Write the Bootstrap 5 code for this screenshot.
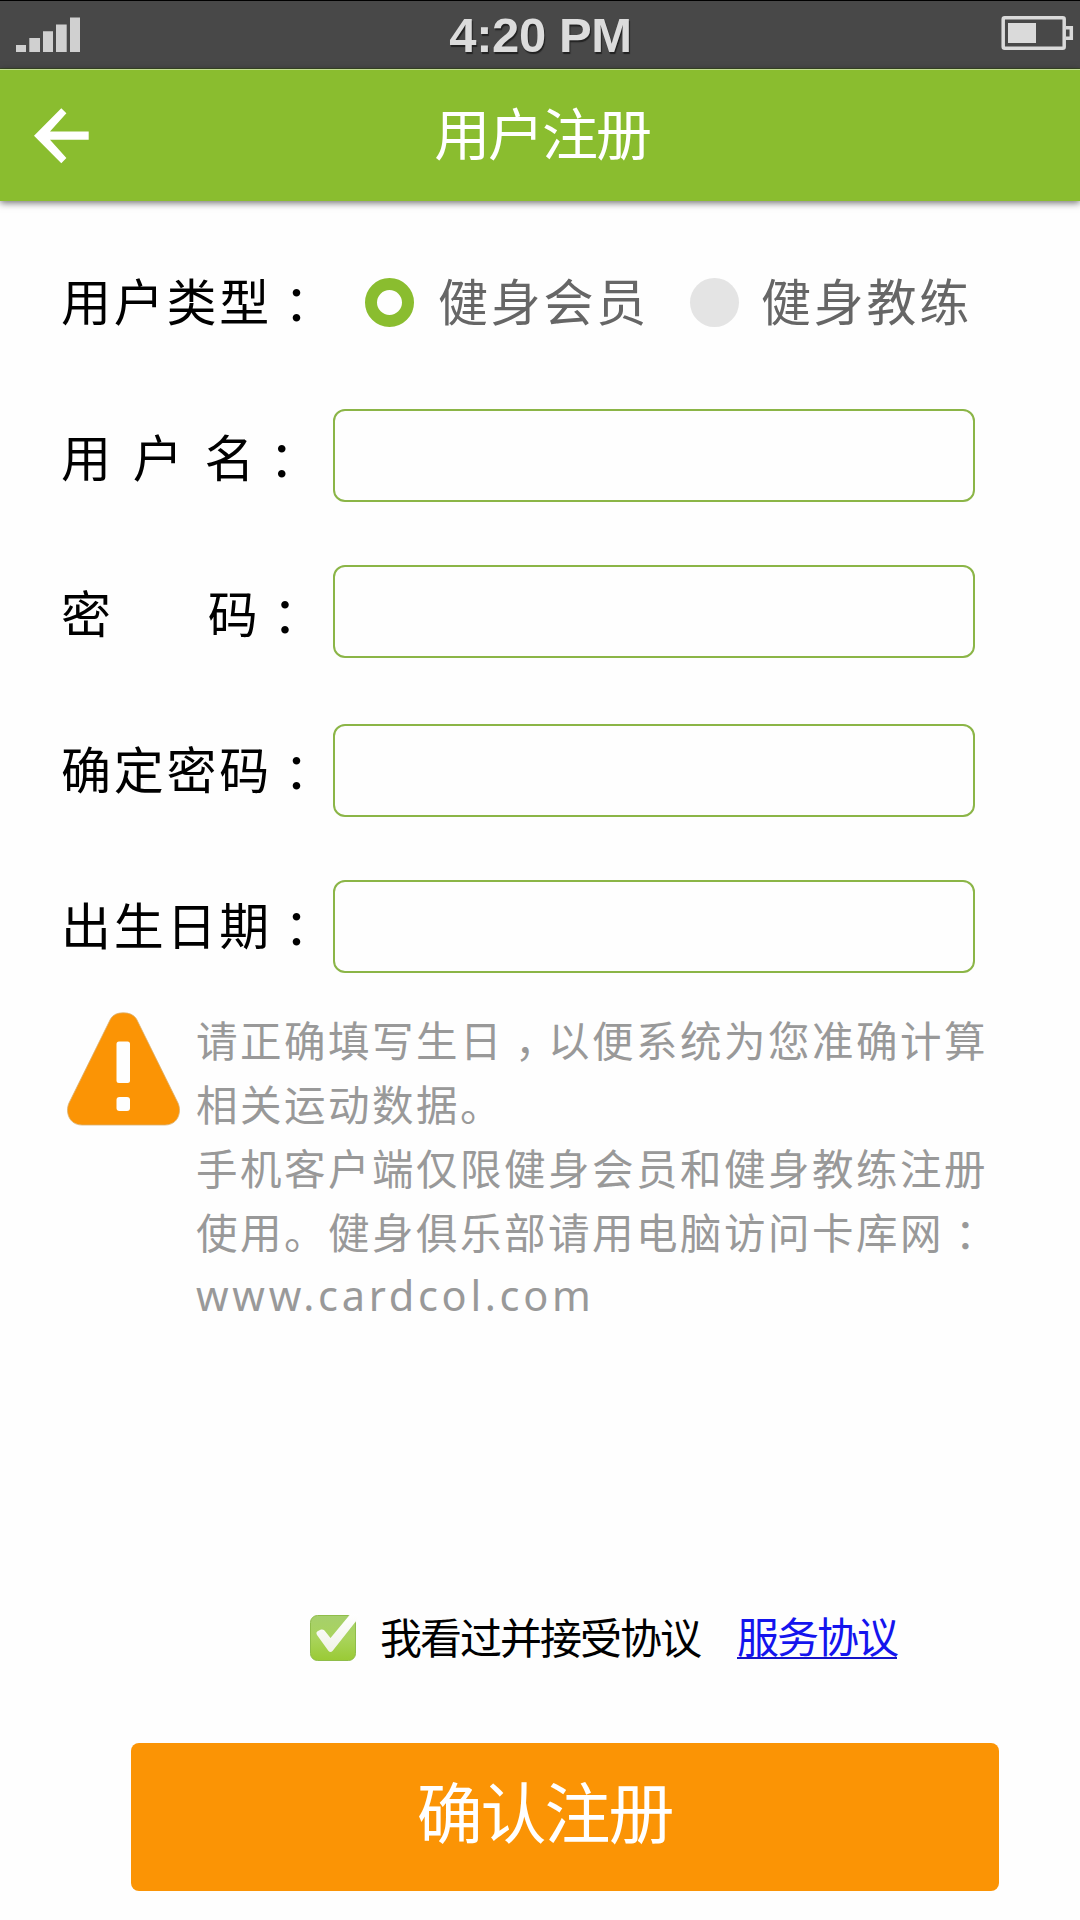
<!DOCTYPE html>
<html lang="zh-CN">
<head>
<meta charset="utf-8">
<meta name="viewport" content="width=device-width, initial-scale=1">
<title>用户注册</title>
<link rel="stylesheet" href="https://cdn.jsdelivr.net/npm/bootstrap@5.3.0/dist/css/bootstrap.min.css">
<style>
  body { font-family: "Noto Sans CJK SC", sans-serif; background: #fefefe; color: #000; }
  .screen { width: 1080px; height: 1920px; overflow: hidden; }
  .punct { padding-left: 12px; letter-spacing: -9.25px; }
  .notice-text .punct { padding-left: 11px; letter-spacing: -8.5px; }
  .statusbar { height: 69px; background: #484848; border-top: 1px solid #000; border-bottom: 1px solid #3a4a24; padding: 0 6px 0 16px; }
  .clock { font: bold 49px/67px "Liberation Sans", Arial, sans-serif; letter-spacing: -.4px; color: #dcdcdc; text-shadow: 1px 2px 1px #222; padding: 2px 9px 0 0; }
  .side { width: 80px; }
  .titlebar { height: 132px; background: #8abd2f; border-top: 1px solid #c2dc92; box-shadow: 0 2px 7px rgba(0,0,0,.55); padding: 0 34px; }
  .titlebar h1 { font-size: 56px; line-height: 70px; letter-spacing: -2.1px; font-weight: 400; color: #fff; padding: 0 0 9px 4px; }
  .titlebar .side { width: 56px; }
  .form-area { padding: 77px 0 0 61px; }
  .form-line { height: 93px; margin-bottom: 63px; }
  .form-line.type-line { height: 49px; margin-bottom: 82px; }
  .field-name { width: 272px; font-size: 50px; line-height: 60px; letter-spacing: 2.75px; white-space: nowrap; padding-bottom: 8px; }
  .field-name.spaced { word-spacing: 5px; }
  .wide-gap { padding-left: 94px; }
  .field-name.nudge { padding: 0 0 2px; }
  .form-control.field { width: 642px; height: 93px; border: 2px solid #8bb547; border-radius: 12px; font-size: 44px; background: #fefefe; }
  .choice { font-size: 50px; line-height: 60px; letter-spacing: 2.75px; color: #666; white-space: nowrap; }
  .choice span { padding-bottom: 8px; }
  .form-check-input.dot { width: 49px; height: 49px; margin: 0; border: 0; background: #e4e4e4; }
  .form-check-input.dot:checked { background: #fefefe; border: 12px solid #8abd2f; }
  .notice { padding: 38px 0 0 66px; }
  .notice-text { font-size: 41.5px; line-height: 64px; letter-spacing: 2.5px; color: #999; margin: -4px 0 0 15px; white-space: nowrap; }
  .site { font-family: "Noto Sans", sans-serif; letter-spacing: 3.7px; display: block; }
  .agree { font-size: 42px; line-height: 50px; letter-spacing: -2px; margin-top: 287px; padding-left: 309px; }
  .agree span, .agree a { margin-top: -4px; }
  .agree a { color: #1414ee; text-decoration: none; line-height: 44px; border-bottom: 2px solid #1414c8; margin-left: 37px; }
  .btn.submit { width: 868px; height: 148px; margin: 81px 0 0 131px; border: 0; border-radius: 8px; background: #fb9405; color: #fff; font-size: 66px; line-height: 80px; letter-spacing: -2.1px; padding: 0 41px 17px 0; }
</style>
<script src="https://cdn.jsdelivr.net/npm/bootstrap@5.3.0/dist/js/bootstrap.bundle.min.js"></script>
</head>
<body>
<main class="screen d-flex flex-column">
  <header class="statusbar d-flex justify-content-between align-items-center flex-shrink-0">
    <svg class="side" width="80" height="68" viewBox="16 1 80 68" fill="#d0d0d0"><path d="M16 45h10v7H16zM29.3 38H40v14H29.3zM43 31.200h10V52H43zM56 24.500h10.700V52H56zM70 17.500h10V52H70z"/></svg>
    <div class="clock">4:20 PM</div>
    <svg class="side" width="80" height="68" viewBox="994 1 80 68" fill="none" stroke="#dadada" stroke-width="3.500"><rect x="1003.200" y="17.700" width="61" height="30.500" rx="1.500"/><path d="M1066 27.700h5.300v10.600H1066"/><path d="M1008 23h28v20h-28z" fill="#dadada" stroke="none"/></svg>
  </header>
  <nav class="titlebar d-flex align-items-center justify-content-between flex-shrink-0">
    <svg class="side" width="56" height="56" viewBox="34 107.500 56 56" fill="#fff"><path d="M34 135.300 61.300 107.700 66.400 112.800 50 131H88.700V139.200H50L66.400 157.500 61.300 162.800z"/></svg>
    <h1 class="mb-0">用户注册</h1>
    <span class="side"></span>
  </nav>
  <form class="form-area">
    <div class="form-line type-line d-flex align-items-center">
      <div class="field-name">用户类型<span class="punct">：</span></div>
      <label class="choice d-flex align-items-center" style="margin-left:32px"><input class="form-check-input dot" type="radio" name="role" checked><span style="margin-left:24px">健身会员</span></label>
      <label class="choice d-flex align-items-center" style="margin-left:41px"><input class="form-check-input dot" type="radio" name="role"><span style="margin-left:22px">健身教练</span></label>
    </div>
    <div class="form-line d-flex align-items-center">
      <label class="field-name spaced nudge" for="user">用 户 名<span class="punct">：</span></label>
      <input class="form-control field" id="user" type="text">
    </div>
    <div class="form-line d-flex align-items-center" style="margin-bottom:66px">
      <label class="field-name nudge" for="pass">密<span class="wide-gap">码</span><span class="punct">：</span></label>
      <input class="form-control field" id="pass" type="password">
    </div>
    <div class="form-line d-flex align-items-center">
      <label class="field-name" for="pass2">确定密码<span class="punct">：</span></label>
      <input class="form-control field" id="pass2" type="password">
    </div>
    <div class="form-line d-flex align-items-center mb-0">
      <label class="field-name" for="birth">出生日期<span class="punct">：</span></label>
      <input class="form-control field" id="birth" type="text">
    </div>
  </form>
  <section class="notice d-flex align-items-start">
    <svg class="flex-shrink-0" width="115" height="117" viewBox="66 1011 115 117"><path d="M110.500 1019Q114 1012.800 123.300 1012.800T136.500 1019L178 1103C182 1112 178 1125 165 1125H82C69 1125 65 1112 69 1103z" fill="#fb9405" stroke="#d9b070" stroke-width=".8"/><rect x="116.500" y="1041.500" width="13.500" height="41.500" rx="2.500" fill="#fefefe"/><rect x="116.500" y="1097" width="13.500" height="14" rx="3" fill="#fefefe"/></svg>
    <p class="notice-text mb-0">请正确填写生日<span class="punct">，</span>以便系统为您准确计算<br>相关运动数据。<br>手机客户端仅限健身会员和健身教练注册<br>使用。健身俱乐部请用电脑访问卡库网<span class="punct">：</span><span class="site">www.cardcol.com</span></p>
  </section>
  <div class="agree d-flex align-items-center">
    <svg class="flex-shrink-0" width="50" height="48" viewBox="309 1613 50 48"><defs><linearGradient id="leaf" x2="0" y2="1"><stop stop-color="#a6cf6c"/><stop offset=".5" stop-color="#a9d45c"/><stop offset="1" stop-color="#9aca35"/></linearGradient><linearGradient id="tick" x2="0" y2="1"><stop stop-color="#fff"/><stop offset="1" stop-color="#f0f2e8"/></linearGradient></defs><rect x="310.500" y="1614.500" width="45" height="45" rx="7" fill="url(#leaf)" stroke="#8fbd4a"/><path d="M350 1613.500 358.500 1613V1617L332.500 1650Q330.500 1652 328.500 1650L317 1634Q315.500 1631 318 1630L321 1628.500Q323 1628 324.500 1629.500L330.500 1637z" fill="url(#tick)"/></svg>
    <span style="margin-left:21px">我看过并接受协议</span>
    <a href="#">服务协议</a>
  </div>
  <button class="btn submit flex-shrink-0" type="button">确认注册</button>
</main>
</body>
</html>
